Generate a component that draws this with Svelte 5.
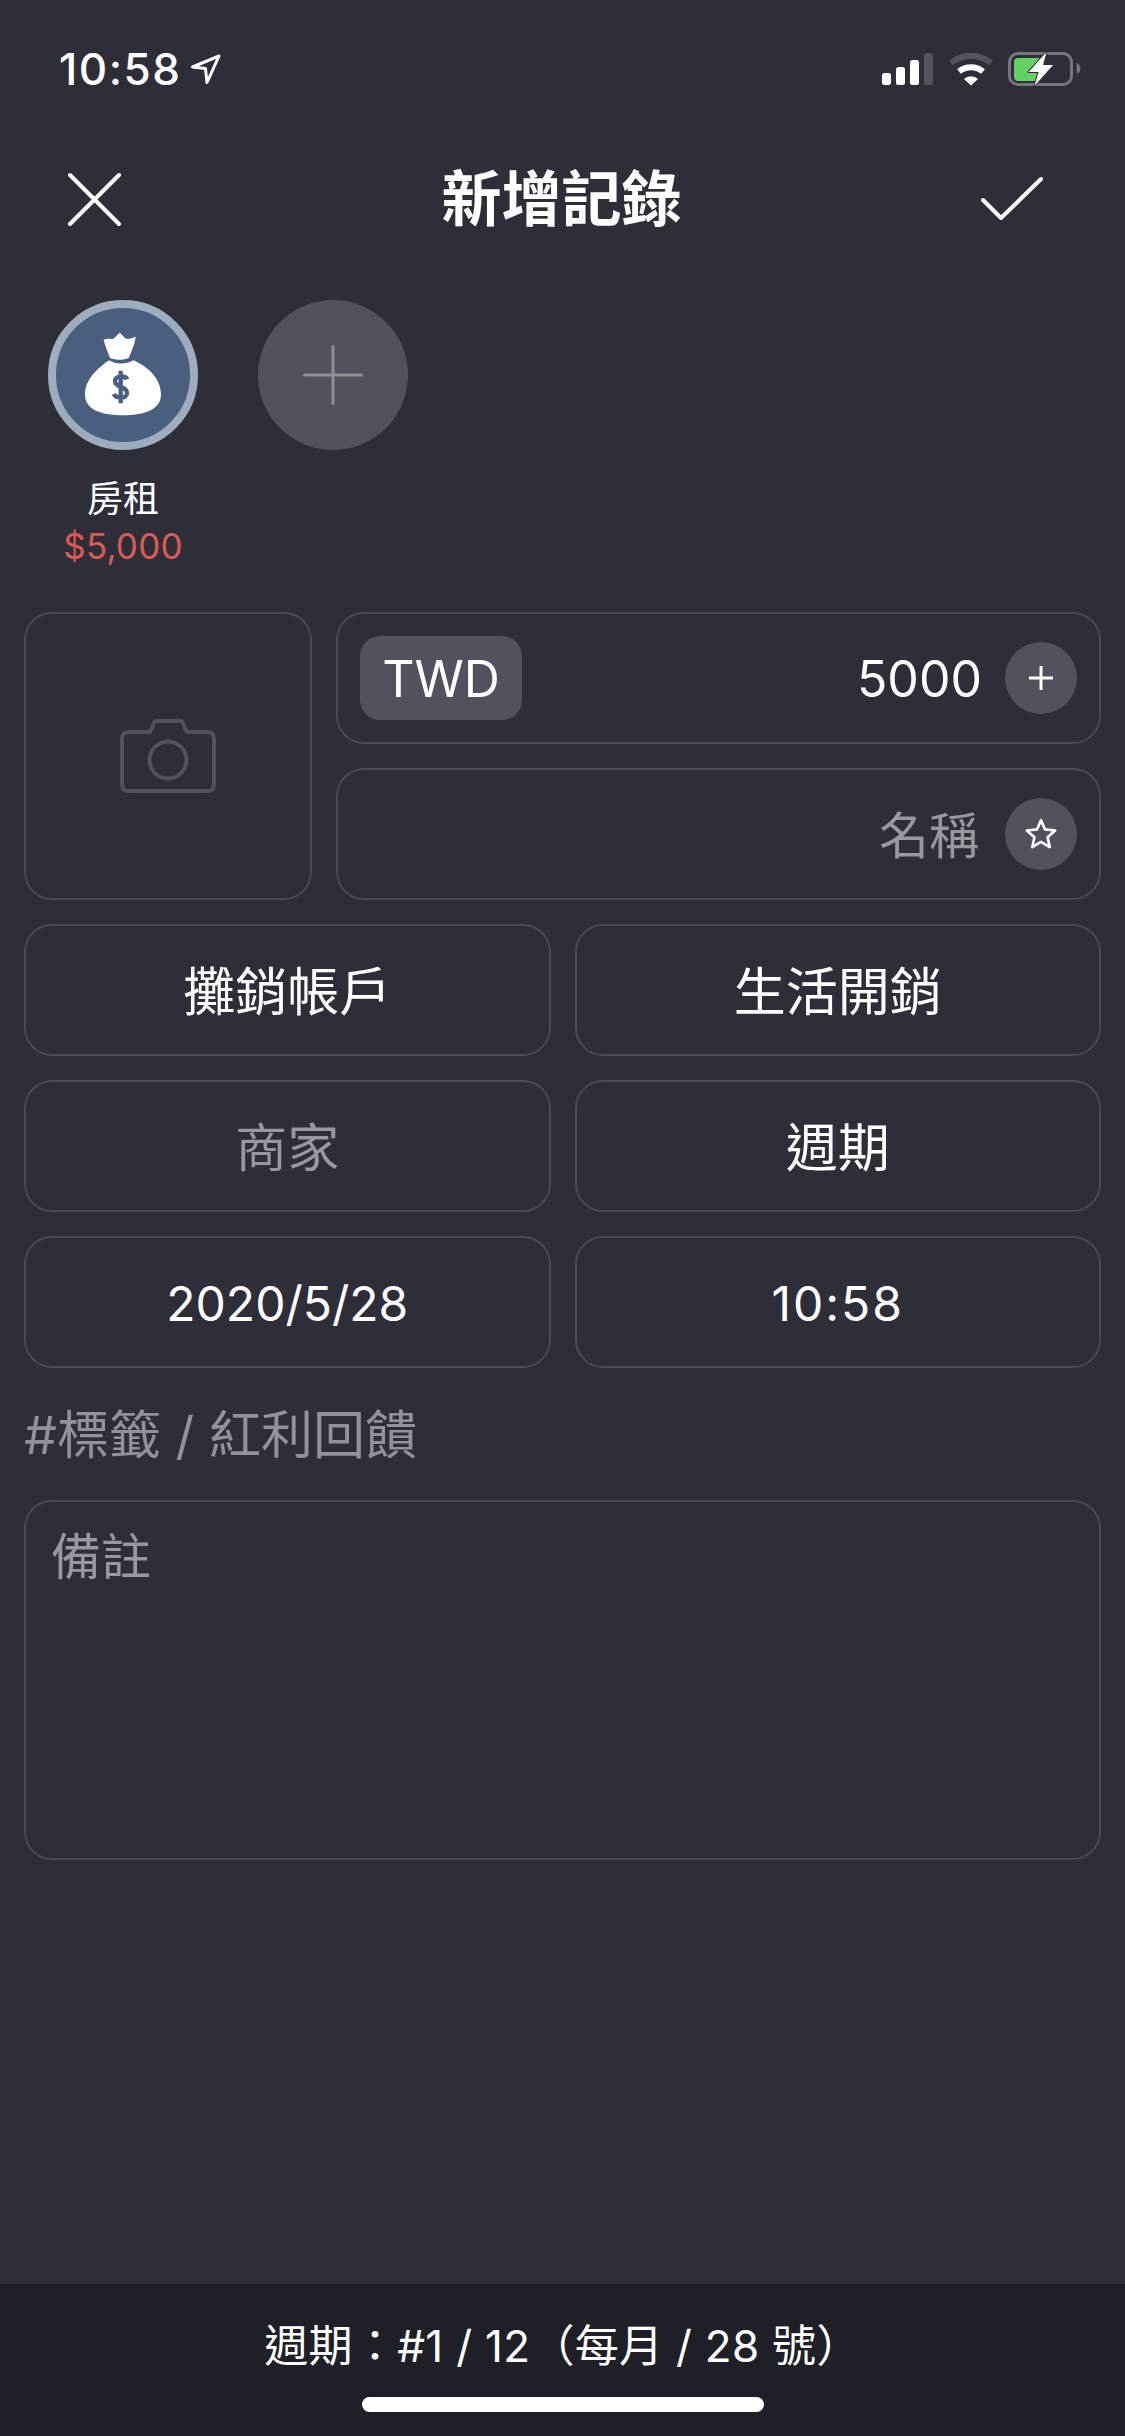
<script>
	const rows = [
		[{ text: '攤銷帳戶' }, { text: '生活開銷' }],
		[{ text: '商家', muted: true }, { text: '週期' }],
		[{ text: '2020/5/28', num: true }, { text: '10:58', num: true, wide: true }]
	];
</script>

<div class="page">
	<div class="status">
		<div class="clock">
			<span>10:58</span>
			<svg width="32" height="32" viewBox="0 0 32 32" fill="none" stroke="#fff" stroke-width="3" stroke-linejoin="round">
				<path d="M29 3 L2.500 14 L15.500 15.500 L17 29.500 Z" />
			</svg>
		</div>
		<div class="indicators">
			<svg width="52" height="34" viewBox="0 0 52 34">
				<rect x="0" y="21" width="9" height="12" rx="2.500" fill="#fff" />
				<rect x="14" y="15" width="9" height="18" rx="2.500" fill="#fff" />
				<rect x="28" y="8" width="9" height="25" rx="2.500" fill="#fff" />
				<rect x="42" y="1" width="9" height="32" rx="2.500" fill="#55545e" />
			</svg>
			<svg width="46" height="34" viewBox="0 0 46 34" fill="none">
				<path d="M3 11 A31 31 0 0 1 43 11" stroke="#55545e" stroke-width="6" />
				<path d="M11 19.500 A19 19 0 0 1 35 19.500" stroke="#fff" stroke-width="6" />
				<path d="M16 27 A10 10 0 0 1 30 27 L23 33.500 Z" fill="#fff" />
			</svg>
			<svg width="74" height="34" viewBox="0 0 74 34" fill="none">
				<rect x="1.500" y="1.500" width="62" height="31" rx="8.500" stroke="#77767c" stroke-width="3" />
				<rect x="6" y="6" width="28" height="23" rx="4" fill="#64d164" />
				<path d="M68.700 11 C71 11.500 72.300 14 72.300 16.500 C72.300 19 71 21.500 68.700 22 Z" fill="#77767c" />
				<path d="M38.500 0 L20.500 20 L30.500 20 L26.500 34 L45 13 L35 13 Z" fill="#fff" stroke="#2e2e39" stroke-width="2" paint-order="stroke" stroke-linejoin="round" />
			</svg>
		</div>
	</div>

	<header class="topbar">
		<svg class="topbar-left" width="56" height="56" viewBox="0 0 56 56" fill="none" stroke="#fff" stroke-width="4" stroke-linecap="round">
			<path d="M5 4 L54 53 M54 4 L5 53" />
		</svg>
		<h1>新增記錄</h1>
		<svg class="topbar-right" width="66" height="48" viewBox="0 0 66 48" fill="none" stroke="#fff" stroke-width="4" stroke-linecap="round" stroke-linejoin="round">
			<path d="M4 26 L22 44 L62 5" />
		</svg>
	</header>

	<div class="budgets">
		<div class="budget">
			<div class="avatar">
				<svg class="bag" width="80" height="86" viewBox="190 155 238 258">
					<path d="M251 182 C262 176 272 180 280 178 C286 174 292 166 299 160 C306 166 312 174 318 178 C328 180 336 176 347 172 C345 190 338 208 326 236 C310 243 288 243 270 236 C262 216 256 200 251 182 Z" fill="#fff" />
					<path d="M268 243 C288 256 318 256 340 243 C385 262 423 300 423 345 C423 395 365 408 310 408 C250 408 195 395 195 345 C195 300 235 264 268 243 Z" fill="#fff" />
					<path d="M322 300 C316 288 284 288 285 306 C286 326 322 320 321 342 C320 360 288 358 281 344 M302 274 L302 372" fill="none" stroke="#4a5f7e" stroke-width="13" />
				</svg>
			</div>
			<div class="budget-name">房租</div>
			<div class="budget-amount">$5,000</div>
		</div>
		<div class="avatar add">
			<svg width="60" height="60" viewBox="0 0 60 60" fill="none" stroke="#908f96" stroke-width="3" stroke-linecap="round">
				<path d="M30 1.500 V58.500 M1.500 30 H58.500" />
			</svg>
		</div>
	</div>

	<main class="form">
		<div class="top-grid">
			<div class="box photo">
				<svg width="96" height="74" viewBox="0 0 96 74" fill="none" stroke="#52515d" stroke-width="4" stroke-linejoin="round">
					<path d="M30 13 L35 2 H62 L67 13 H87 Q94 13 94 20 V65 Q94 72 87 72 H9 Q2 72 2 65 V20 Q2 13 9 13 Z" />
					<circle cx="48" cy="41" r="18.500" />
				</svg>
			</div>
			<div class="box amount">
				<span class="currency">TWD</span>
				<span class="value">5000</span>
				<span class="round-btn">
					<svg width="26" height="26" viewBox="0 0 26 26" fill="none" stroke="#fff" stroke-width="3">
						<path d="M13 1 V25 M1 13 H25" />
					</svg>
				</span>
			</div>
			<div class="box name">
				<span class="label muted">名稱</span>
				<span class="round-btn">
					<svg width="34" height="34" viewBox="0 0 32 32" fill="none" stroke="#fff" stroke-width="2.500" stroke-linejoin="round">
						<path d="M16 3 L19.800 11.700 L29.300 12.700 L22.200 19 L24.200 28.300 L16 23.500 L7.800 28.300 L9.800 19 L2.700 12.700 L12.200 11.700 Z" />
					</svg>
				</span>
			</div>
		</div>

		<div class="pairs">
			{#each rows as row}
				{#each row as cell}
					<div class="box cell" class:muted={cell.muted} class:num={cell.num} class:wide={cell.wide}>{cell.text}</div>
				{/each}
			{/each}
		</div>

		<div class="tags">#標籤 / 紅利回饋</div>
		<div class="box note">備註</div>
	</main>

	<footer class="bottom">
		<div class="cycle">週期：#1 / 12（每月 / 28 號）</div>
		<div class="home"></div>
	</footer>
</div>

<style>
	:global(body) {
		margin: 0;
		background: #2e2e39;
	}

	.page {
		width: 1125px;
		height: 2436px;
		display: flex;
		flex-direction: column;
		background: #2e2e39;
		color: #fff;
		font-family: Inter, "Noto Sans CJK TC", sans-serif;
		overflow: hidden;
	}

	.status {
		height: 138px;
		box-sizing: border-box;
		padding: 52px 43px 0 59px;
		display: flex;
		justify-content: space-between;
		align-items: flex-start;
	}

	.clock {
		display: flex;
		align-items: center;
		gap: 9px;
		height: 34px;
		font-size: 44px;
		font-weight: 500;
		letter-spacing: 1.500px;
		line-height: 34px;
	}

	.indicators {
		display: flex;
		gap: 14px;
	}

	.indicators svg {
		display: block;
	}

	.topbar {
		height: 122px;
		padding: 0 80px 0 65px;
		display: grid;
		grid-template-columns: 1fr auto 1fr;
		align-items: center;
	}

	.topbar h1 {
		margin: 0 0 0 13px;
		font-size: 60px;
		font-weight: 700;
		line-height: 1;
	}

	.topbar-right {
		justify-self: end;
		margin-top: -2px;
	}

	.budgets {
		margin-top: 40px;
		padding-left: 48px;
		display: flex;
		gap: 60px;
		align-items: flex-start;
		height: 312px;
	}

	.budget {
		width: 150px;
		display: flex;
		flex-direction: column;
		align-items: center;
	}

	.avatar {
		width: 150px;
		height: 150px;
		box-sizing: border-box;
		border: 8px solid #9eadbd;
		border-radius: 50%;
		background: #4a5f7e;
		display: flex;
		align-items: center;
		justify-content: center;
	}

	.avatar.add {
		border: none;
		background: #52515d;
	}

	.bag {
		margin-top: -2px;
	}

	.budget-name {
		margin-top: 26px;
		font-size: 36px;
		line-height: 46px;
		white-space: nowrap;
	}

	.budget-amount {
		margin-top: 1px;
		font-size: 35px;
		letter-spacing: 0.200px;
		line-height: 46px;
		color: #dc5a54;
		white-space: nowrap;
	}

	.form {
		padding: 0 24px;
		display: flex;
		flex-direction: column;
	}

	.box {
		box-sizing: border-box;
		border: 2px solid #4b4a56;
		border-radius: 28px;
		display: flex;
		align-items: center;
		justify-content: center;
		font-size: 52px;
	}

	.top-grid {
		display: grid;
		grid-template-columns: 288px 1fr;
		grid-template-rows: 132px 132px;
		gap: 24px;
	}

	.photo {
		grid-row: 1 / 3;
	}

	.amount,
	.name {
		justify-content: flex-end;
		padding: 0 22px;
		gap: 23px;
	}

	.currency {
		margin-right: auto;
		width: 162px;
		height: 84px;
		border-radius: 20px;
		background: #52515d;
		display: flex;
		align-items: center;
		justify-content: center;
		font-size: 50px;
		padding-top: 2px;
		box-sizing: border-box;
	}

	.value {
		font-size: 50px;
		padding-top: 2px;
	}

	.label {
		font-size: 50px;
		padding-bottom: 4px;
		margin-right: 3px;
	}

	.muted {
		color: #98989e;
	}

	.round-btn {
		width: 72px;
		height: 72px;
		border-radius: 50%;
		background: #52515d;
		display: flex;
		align-items: center;
		justify-content: center;
	}

	.pairs {
		margin-top: 24px;
		display: grid;
		grid-template-columns: 1fr 1fr;
		grid-auto-rows: 132px;
		gap: 24px;
	}

	.cell {
		padding-bottom: 4px;
	}

	.cell.num {
		font-size: 48px;
		padding: 2px 0 0;
	}

	.cell.wide {
		letter-spacing: 2px;
	}

	.tags {
		margin-top: 38px;
		font-size: 52px;
		line-height: 60px;
		color: #929298;
	}

	.note {
		margin-top: 34px;
		height: 360px;
		padding: 25px 25px;
		align-items: flex-start;
		justify-content: flex-start;
		font-size: 50px;
		color: #98989e;
		line-height: 60px;
	}

	.bottom {
		margin-top: auto;
		height: 152px;
		box-sizing: border-box;
		background: #1f2027;
		display: flex;
		flex-direction: column;
		align-items: center;
		padding-top: 35px;
	}

	.cycle {
		font-size: 44px;
		letter-spacing: 0.300px;
		line-height: 54px;
		white-space: nowrap;
	}

	.home {
		margin-top: 24px;
		width: 402px;
		height: 15px;
		border-radius: 8px;
		background: #fff;
	}
</style>
